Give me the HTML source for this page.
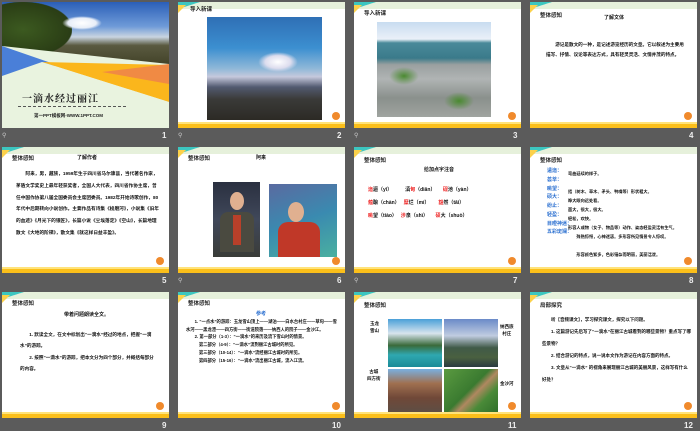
<!DOCTYPE html>
<html><head><meta charset="utf-8"><style>
*{margin:0;padding:0;box-sizing:border-box}
body{width:700px;height:431px;background:#5b5b5b;position:relative;overflow:hidden;font-family:"Liberation Sans","Noto Sans CJK SC",sans-serif}
.s{position:absolute;width:167px;height:126px;background:#fff;overflow:hidden}
.top{position:absolute;left:0;top:0;width:100%;height:7px;background:#eef6e6;background-image:radial-gradient(#cfe3bf 0.6px,transparent 0.8px);background-size:2px 2px}
.tri1{position:absolute;left:0;top:0;width:0;height:0;border-top:7px solid #3cc6c0;border-right:22px solid transparent}
.tri2{position:absolute;left:0;top:3px;width:0;height:0;border-top:8px solid #fcd14a;border-right:8px solid transparent}
.bot{position:absolute;left:0;bottom:0;width:100%;height:6px;background:linear-gradient(#ffe37a 0 30%,#fbbf1a 30%)}
.dot{position:absolute;right:5px;bottom:4px;width:8px;height:8px;border-radius:50%;background:#f08a2c}
.hd{position:absolute;left:10px;top:7px;font-size:5.5px;color:#222;font-weight:bold}
.t{position:absolute;font-size:4.6px;color:#111;font-weight:bold;line-height:1.65}
.n{position:absolute;color:#eee;font-size:8px;font-weight:bold}
.ic{position:absolute;color:#ccc;font-size:6px}
.r{color:#e22}.b{color:#2a6fd0}
</style></head><body>

<!-- slide 1 -->
<div class="s" style="left:2px;top:2px;background:#e9f3df;background-image:radial-gradient(#cfe0c0 0.6px,transparent 0.8px);background-size:2px 2px">
 <div style="position:absolute;left:0;top:0;width:167px;height:70px;background:linear-gradient(180deg,#2b5fb8 0%,#6f9bd8 35%,#c9d4e0 50%,#5a5a40 62%,#3a3a20 100%)"></div>
 <div style="position:absolute;left:0;top:0;width:70px;height:55px;background:radial-gradient(ellipse at 30% 50%,#3c5a20,#2a3d15 70%,transparent 72%)"></div>
 <div style="position:absolute;left:60px;top:14px;width:40px;height:14px;background:radial-gradient(ellipse,#fff,#e8eef8 50%,transparent 70%)"></div>
 <svg style="position:absolute;left:0;top:0" width="167" height="126">
  <polygon points="0,44 167,62 167,90 0,74" fill="#e9f3df"/>
  <polygon points="0,44 55,63 0,82" fill="#4a7fd8"/>
  <polygon points="0,82 55,63 0,100" fill="#fcc93c"/>
  <polygon points="40,60 167,63 167,100" fill="#fbb61c"/>
  <polygon points="100,70 167,62 167,82" fill="#f08a44"/>
  <polygon points="0,74 0,126 167,126 167,100 40,60" fill="#e9f3df"/>
 </svg>
 <div style="position:absolute;left:20px;top:88px;font-size:10px;font-weight:bold;color:#222;letter-spacing:1px;font-family:'Noto Serif CJK SC',serif">一滴水经过丽江</div>
 <div style="position:absolute;left:16px;top:104px;width:108px;border-top:1px dashed #555"></div>
 <div style="position:absolute;left:32px;top:111px;font-size:4.5px;color:#222;font-weight:bold">第一PPT模板网-WWW.1PPT.COM</div>
</div>
<div class="ic" style="left:2px;top:132px">⚲</div><div class="n" style="left:162px;top:131px">1</div>

<!-- slide 2 -->
<div class="s" style="left:178px;top:2px">
 <div class="top"></div><div class="tri1"></div><div class="tri2"></div>
 <div class="hd" style="top:3px;left:12px">导入新课</div>
 <div style="position:absolute;left:29px;top:15px;width:115px;height:103px;background:linear-gradient(180deg,#2f6fb5 0%,#3c8fd0 30%,#8fb8d8 50%,#c5c8dc 58%,#525a70 68%,#3a3a38 80%,#2c2a25 100%)"></div>
 <div style="position:absolute;left:80px;top:50px;width:40px;height:20px;background:radial-gradient(ellipse,#fff,#dde 45%,transparent 70%)"></div>
 <div class="bot"></div><div class="dot" style="bottom:8px"></div>
</div>
<div class="ic" style="left:178px;top:132px">⚲</div><div class="n" style="left:337px;top:131px">2</div>

<!-- slide 3 -->
<div class="s" style="left:354px;top:2px">
 <div class="top"></div><div class="tri1"></div><div class="tri2"></div>
 <div class="hd" style="top:7px">导入新课</div>
 <div style="position:absolute;left:23px;top:20px;width:114px;height:95px;background:linear-gradient(180deg,#c8dcf0 0%,#eaf0f8 18%,#4a8a9a 22%,#3a7a8a 38%,#9aa0a0 45%,#b0b4b4 60%,#8a908c 80%,#a0a4a0 100%)"></div>
 <div style="position:absolute;left:35px;top:65px;width:30px;height:18px;background:radial-gradient(#4a8a30,transparent 70%)"></div>
 <div style="position:absolute;left:90px;top:90px;width:30px;height:18px;background:radial-gradient(#4a8a30,transparent 70%)"></div>
 <div class="bot"></div><div class="dot" style="bottom:8px"></div>
</div>
<div class="ic" style="left:354px;top:132px">⚲</div><div class="n" style="left:513px;top:131px">3</div>

<!-- slide 4 -->
<div class="s" style="left:530px;top:2px">
 <div class="top"></div><div class="tri1"></div><div class="tri2"></div>
 <div class="hd" style="top:9px">整体感知</div>
 <div class="t" style="left:74px;top:12px;font-size:5px">了解文体</div>
 <div class="t" style="left:16px;top:38px;width:140px;line-height:2.2">　　游记是散文的一种，是记述游览经历的文章。它以叙述为主要用描写、抒情、议论等表达方式，具有轻灵灵活、文情并茂的特点。</div>
 <div class="bot"></div><div class="dot" style="bottom:8px"></div>
</div>
<div class="n" style="left:689px;top:131px">4</div>

<!-- slide 5 -->
<div class="s" style="left:2px;top:147px">
 <div class="top"></div><div class="tri1"></div><div class="tri2"></div>
 <div class="hd" style="top:7px">整体感知</div>
 <div class="t" style="left:75px;top:7px;font-size:5px">了解作者</div>
 <div class="t" style="left:14px;top:21px;width:145px;line-height:2.5;font-size:4.7px">　　阿来，男，藏族，1959年生于四川省马尔康县，当代著名作家，茅盾文学奖史上最年轻获奖者，全国人大代表，四川省作协主席，曾任中国作协第八届全国委员会主席团委员。1982年开始诗歌创作，80年代中后期转向小说创作。主要作品有诗集《梭磨河》，小说集《旧年的血迹》《月光下的银匠》，长篇小说《尘埃落定》《空山》，长篇地理散文《大地的阶梯》，散文集《就这样日益丰盈》。</div>
 <div class="bot"></div><div class="dot" style="bottom:8px"></div>
</div>
<div class="n" style="left:162px;top:276px">5</div>

<!-- slide 6 -->
<div class="s" style="left:178px;top:147px">
 <div class="top"></div><div class="tri1"></div><div class="tri2"></div>
 <div class="hd" style="top:7px">整体感知</div>
 <div class="t" style="left:78px;top:7px;font-size:5px">阿来</div>
 <div style="position:absolute;left:35px;top:35px;width:47px;height:75px;background:linear-gradient(180deg,#2a3040,#40485a 50%,#3a3c38 100%)"></div>
 <div style="position:absolute;left:52px;top:45px;width:14px;height:18px;border-radius:50%;background:#e0b090"></div>
 <div style="position:absolute;left:42px;top:65px;width:34px;height:40px;background:#4a4a40;border-radius:8px 8px 0 0"></div>
 <div style="position:absolute;left:55px;top:68px;width:8px;height:30px;background:#b8402a"></div>
 <div style="position:absolute;left:91px;top:37px;width:68px;height:73px;background:linear-gradient(160deg,#5a6aa0,#3a8ab0 50%,#4ab0a0 100%)"></div>
 <div style="position:absolute;left:110px;top:55px;width:16px;height:20px;border-radius:50%;background:#e0b090"></div>
 <div style="position:absolute;left:100px;top:75px;width:42px;height:35px;background:#c03828;border-radius:10px 10px 0 0"></div>
 <div class="bot"></div><div class="dot" style="bottom:8px"></div>
</div>
<div class="ic" style="left:178px;top:277px">⚲</div><div class="n" style="left:337px;top:276px">6</div>

<!-- slide 7 -->
<div class="s" style="left:354px;top:147px">
 <div class="top"></div><div class="tri1"></div><div class="tri2"></div>
 <div class="hd" style="top:9px">整体感知</div>
 <div class="t" style="left:70px;top:19px;font-size:5px">给加点字注音</div>
 <div class="t" style="left:14px;top:37px;width:150px;line-height:2.6;font-size:5px">
 <span class="r">迤</span>逦（yǐ）　　 <span style="display:inline-block;width:4px"></span>滇<span class="r">甸</span>（diān）　　<span class="r">砚</span>池（yàn）<br>
 <span class="r">蕴</span>酿（chàn）　 <span class="r">糜</span>烂（mí）　　 <span class="r">豁</span>然（tāi）<br>
 <span class="r">眺</span>望（tiào）　 <span class="r">涉</span>泉（shì）　　<span class="r">硕</span>大（shuò）</div>
 <div class="bot"></div><div class="dot" style="bottom:8px"></div>
</div>
<div class="ic" style="left:354px;top:277px">⚲</div><div class="n" style="left:513px;top:276px">7</div>

<!-- slide 8 -->
<div class="s" style="left:530px;top:147px">
 <div class="top"></div><div class="tri1"></div><div class="tri2"></div>
 <div class="hd" style="top:9px">整体感知</div>
 <div class="t b" style="left:17px;top:20px;line-height:1.75;font-size:5px">逶迤：<br>荟萃：<br>眺望：<br>硕大：<br>纷止：<br>轻盈：<br>目瞪神迷：<br>五彩斑斓：</div>
 <div class="t" style="left:38px;top:22px;width:125px;line-height:2.15;font-size:4.2px">弯曲延续的样子。<br>　<br>指（树木、草木、矛头、鸭嘴等）形状粗大。<br>睁大眼向远处看。<br>面大，很大，很大。<br>轻松，欢快。<br>形容人或物（女子、物品等）动作、姿态轻盈灵活有生气。<br>　　殊熟惊愕，心神迷惑。多形容所见情景令人惊叹。<br>　<br>　　形容颜色繁多，色彩错杂而明丽，美丽活泼。</div>
 <div class="bot"></div><div class="dot" style="bottom:8px"></div>
</div>
<div class="n" style="left:689px;top:276px">8</div>

<!-- slide 9 -->
<div class="s" style="left:2px;top:292px">
 <div class="top"></div><div class="tri1"></div><div class="tri2"></div>
 <div class="hd" style="top:7px">整体感知</div>
 <div class="t" style="left:62px;top:19px;font-size:5px">带着问题朗读全文。</div>
 <div class="t" style="left:18px;top:37px;width:135px;line-height:2.5">　　1. 默读全文，在文中标划出“一滴水”经过的地点，把握“一滴水”的游踪。<br>　　2. 按照“一滴水”的游踪，把本文分为四个部分，并概括每部分的内容。</div>
 <div class="bot"></div><div class="dot" style="bottom:8px"></div>
</div>
<div class="n" style="left:162px;top:421px">9</div>

<!-- slide 10 -->
<div class="s" style="left:178px;top:292px">
 <div class="top"></div><div class="tri1"></div><div class="tri2"></div>
 <div class="hd" style="top:7px">整体感知</div>
 <div class="t b" style="left:78px;top:18px;font-size:5px">参考</div>
 <div class="t" style="left:8px;top:26px;width:152px;line-height:1.8;font-size:4.3px">　　1. “一点水”的游踪：玉龙雪山顶上——湖泊——白水台村庄——草甸——雪水河——黑龙潭——四方街——街道院落——纳西人的院子——金沙江。<br>　　2. 第一部分（1-3）：“一滴水”的来历及流下雪山时的情景。<br>　　　第二部分（4-9）：“一滴水”流到丽江古城时的所见。<br>　　　第三部分（10-14）：“一滴水”流经丽江古城时的所见。<br>　　　第四部分（15-16）：“一滴水”流出丽江古城，流入江流。</div>
 <div class="bot"></div><div class="dot" style="bottom:8px"></div>
</div>
<div class="n" style="left:332px;top:421px">10</div>

<!-- slide 11 -->
<div class="s" style="left:354px;top:292px">
 <div class="top"></div><div class="tri1"></div><div class="tri2"></div>
 <div class="hd" style="top:9px">整体感知</div>
 <div class="t" style="left:16px;top:29px;font-size:4.5px;line-height:1.5;text-align:center">玉龙<br>雪山</div>
 <div class="t" style="left:146px;top:32px;font-size:4.5px;line-height:1.5;text-align:center">纳西族<br>村庄</div>
 <div class="t" style="left:13px;top:77px;font-size:4.5px;line-height:1.5;text-align:center">古城<br>四方街</div>
 <div class="t" style="left:146px;top:88px;font-size:4.5px">金沙河</div>
 <div style="position:absolute;left:34px;top:27px;width:54px;height:48px;background:linear-gradient(180deg,#4aa0d8 0%,#d8e4ee 30%,#3a6a3a 55%,#2fa8b0 75%,#1a8a98 100%)"></div>
 <div style="position:absolute;left:90px;top:27px;width:54px;height:48px;background:linear-gradient(180deg,#6a8ac8 0%,#c0cce0 35%,#405a48 60%,#4a6040 80%,#2a3a40 100%)"></div>
 <div style="position:absolute;left:34px;top:77px;width:54px;height:48px;background:linear-gradient(180deg,#7ab0e0 0%,#a07050 30%,#704838 60%,#585048 100%)"></div>
 <div style="position:absolute;left:90px;top:77px;width:54px;height:48px;background:linear-gradient(135deg,#5a9a40 0%,#3a7a30 45%,#b08860 55%,#4a8a38 70%,#2a6a28 100%)"></div>
 <div class="bot"></div><div class="dot" style="bottom:8px"></div>
</div>
<div class="n" style="left:508px;top:421px">11</div>

<!-- slide 12 -->
<div class="s" style="left:530px;top:292px">
 <div class="top"></div><div class="tri1"></div><div class="tri2"></div>
 <div class="hd" style="top:9px">局部探究</div>
 <div class="t" style="left:12px;top:22px;width:150px;line-height:2.65;font-size:4.5px">　　听【音频课文】，学习探究课文，探究以下问题。<br>　　1. 这篇游记先后写了“一滴水”在丽江古城看到的哪些景物？重点写了哪些景物？<br>　　2. 结合游记的特点，说一说本文作为游记在内容方面的特点。<br>　　3. 文章从“一滴水” 的视角来展现丽江古城的美丽风景，这样写有什么好处？</div>
 <div class="bot"></div><div class="dot" style="bottom:8px"></div>
</div>
<div class="n" style="left:684px;top:421px">12</div>

</body></html>
